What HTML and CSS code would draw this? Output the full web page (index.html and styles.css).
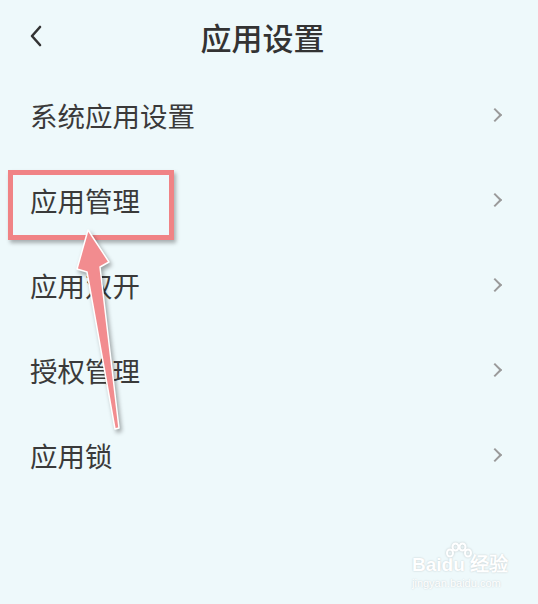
FILE: index.html
```html
<!DOCTYPE html>
<html lang="zh-CN">
<head>
    <meta charset="UTF-8">
    <meta name="viewport" content="width=device-width, initial-scale=1.0">
    <title>应用设置</title>
    <link rel="stylesheet" href="styles.css">
</head>
<body>
    <div class="screen">
        <div class="topbar">
            <span class="back">
                <svg width="14" height="22" viewBox="0 0 14 22"><path d="M11 2 L3 11 L11 20" fill="none" stroke="#333" stroke-width="2.6" stroke-linecap="round" stroke-linejoin="round"/></svg>
            </span>
            <h1>应用设置</h1>
        </div>
        <ul class="menu">
            <li class="menu-item"><span>系统应用设置</span><i class="chev"></i></li>
            <li class="menu-item"><span>应用管理</span><i class="chev"></i></li>
            <li class="menu-item"><span>应用双开</span><i class="chev"></i></li>
            <li class="menu-item"><span>授权管理</span><i class="chev"></i></li>
            <li class="menu-item"><span>应用锁</span><i class="chev"></i></li>
        </ul>

        <!-- 标注 -->
        <div class="mark-box"></div>
        <svg class="mark-arrow" width="538" height="604" viewBox="0 0 538 604">
            <polygon points="88,230 109,262 100,267 119,428 115,429 87,272 77,269" fill="#f28c8f" stroke="#fff" stroke-width="1.5" stroke-linejoin="round"/>
        </svg>

        <div class="watermark">
            <svg class="wm-paw" width="30" height="26" viewBox="0 0 30 26">
                <g fill="none" stroke="#fff" stroke-width="2">
                    <ellipse cx="6" cy="11" rx="3" ry="3.5"/>
                    <ellipse cx="11.5" cy="5" rx="3" ry="3.5"/>
                    <ellipse cx="18.5" cy="5" rx="3" ry="3.5"/>
                    <ellipse cx="24" cy="11" rx="3" ry="3.5"/>
                </g>
            </svg>
            <div class="wm-logo">Bai<b>du</b> 经验</div>
            <div class="wm-url">jingyan.baidu.com</div>
        </div>
    </div>
</body>
</html>
```

FILE: styles.css
```css
body {
    margin: 0;
    background-color: #eef9fb;
    font-family: "Noto Sans CJK SC", "Noto Sans", sans-serif;
}
.screen {
    position: relative;
    width: 538px;
    height: 604px;
    overflow: hidden;
}
.topbar {
    display: flex;
    align-items: center;
    height: 72px;
    padding-left: 29px;
}
.back {
    display: flex;
    width: 14px;
}
.back svg {
    width: 15px;
    height: 24px;
}
.topbar h1 {
    flex: 1;
    margin: 0;
    padding-right: 56px;
    text-align: center;
    font-size: 31px;
    font-weight: 500;
    color: #333;
}
.menu {
    list-style: none;
    margin: 0;
    padding: 0;
}
.menu-item {
    display: flex;
    align-items: center;
    justify-content: space-between;
    height: 85px;
    padding: 0 38px 0 30px;
    font-size: 27.5px;
    color: #3a3a3a;
}
.chev {
    width: 8px;
    height: 8px;
    border-top: 2px solid #9a9a9a;
    border-right: 2px solid #9a9a9a;
    transform: rotate(45deg);
}
.mark-box {
    position: absolute;
    left: 8px;
    top: 170px;
    width: 156px;
    height: 60px;
    border: 5px solid #f08385;
    box-shadow: 2px 3px 4px rgba(0, 0, 0, 0.3);
}
.mark-arrow {
    position: absolute;
    left: 0;
    top: 0;
    filter: drop-shadow(2px 3px 2px rgba(0, 0, 0, 0.35));
}
.watermark {
    position: absolute;
    left: 412px;
    top: 546px;
    width: 100px;
    color: #fff;
    text-shadow: 0 0 2px rgba(0, 0, 0, 0.2);
}
.wm-paw {
    position: absolute;
    left: 32px;
    top: -4px;
    filter: drop-shadow(0 0 1px rgba(0, 0, 0, 0.2));
}
.wm-logo {
    margin-top: 8px;
    font-family: "Liberation Sans", sans-serif;
    font-size: 19px;
    font-weight: bold;
    line-height: 22px;
}
.wm-url {
    font-family: "Liberation Sans", sans-serif;
    font-size: 11px;
    line-height: 14px;
}
```
